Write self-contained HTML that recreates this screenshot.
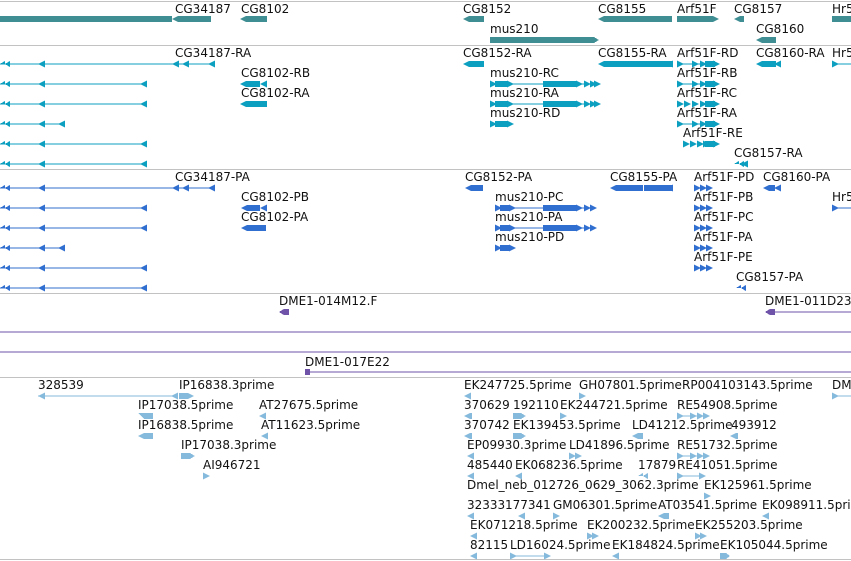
<!DOCTYPE html>
<html><head><meta charset="utf-8"><style>
html,body{margin:0;padding:0;background:#fff;width:851px;height:561px;overflow:hidden}
svg text{font-family:"DejaVu Sans","Liberation Sans",sans-serif;font-size:12px;fill:#111;letter-spacing:0px}
</style></head><body>
<svg width="851" height="561" xmlns="http://www.w3.org/2000/svg" shape-rendering="crispEdges">
<defs>
<polygon id="la" points="0,3 7,-0.5 7,6.5"/>
<polygon id="ra" points="0,-0.5 7,3 0,6.5"/>
<polygon id="la2" points="0,3 5,0 5,6 5,3 10,0 10,6 5,3"/>
</defs>
<g fill="#c2c2c2">
<rect x="0" y="1" width="851" height="1"/><rect x="0" y="45" width="851" height="1"/>
<rect x="0" y="169" width="851" height="1"/><rect x="0" y="293" width="851" height="1"/>
<rect x="0" y="377" width="851" height="1"/><rect x="0" y="559" width="851" height="1"/>
</g>

<!-- Track 1 -->
<g fill="#3f8e93">
<rect x="0" y="16" width="172" height="6"/>
<polygon points="172,19 178,16 211,16 211,22 178,22"/>
<polygon points="240,19 246,16 267,16 267,22 246,22"/>
<polygon points="463,19 469,16 484,16 484,22 469,22"/>
<polygon points="490,37 594,37 599,40 594,43 490,43"/>
<polygon points="598,19 604,16 672,16 672,22 604,22"/>
<polygon points="677,16 713,16 719,19 713,22 677,22"/>
<polygon points="734,19 740,16 744,16 744,22 740,22"/>
<rect x="832" y="16" width="19" height="6"/>
<polygon points="756,40 762,37 776,37 776,43 762,43"/>
</g>
<text x="175" y="13">CG34187</text><text x="241" y="13">CG8102</text>
<text x="463" y="13">CG8152</text><text x="598" y="13">CG8155</text>
<text x="677" y="13">Arf51F</text><text x="734" y="13">CG8157</text>
<text x="832" y="13">Hr5</text>
<text x="490" y="33">mus210</text><text x="756" y="33">CG8160</text>

<!-- Track 2 (RA) -->
<g fill="#0d9fc0">
<rect x="0" y="63.5" width="213" height="1"/>
<use href="#la2" x="0" y="61"/><use href="#la" x="38" y="61"/><use href="#la" x="172" y="61"/><use href="#la" x="182" y="61"/><use href="#la" x="208" y="61"/>
<rect x="0" y="83.5" width="146" height="1"/><use href="#la2" x="0" y="81"/><use href="#la" x="38" y="81"/><use href="#la" x="140" y="81"/>
<rect x="0" y="103.5" width="146" height="1"/><use href="#la2" x="0" y="101"/><use href="#la" x="38" y="101"/><use href="#la" x="140" y="101"/>
<rect x="0" y="123.5" width="64" height="1"/><use href="#la2" x="0" y="121"/><use href="#la" x="38" y="121"/><use href="#la" x="58" y="121"/>
<rect x="0" y="143.5" width="146" height="1"/><use href="#la2" x="0" y="141"/><use href="#la" x="38" y="141"/><use href="#la" x="140" y="141"/>
<rect x="0" y="163.5" width="146" height="1"/><use href="#la2" x="0" y="161"/><use href="#la" x="38" y="161"/><use href="#la" x="140" y="161"/>
</g>
<g fill="#0d9fc0">
<polygon points="240,84 246,81 260,81 260,87 246,87"/><use href="#la" x="260" y="81"/>
<polygon points="240,104 246,101 267,101 267,107 246,107"/>
<polygon points="463,64 469,61 484,61 484,67 469,67"/>
<polygon points="598,64 604,61 672,61 672,67 604,67"/><use href="#la" x="666" y="61"/>
<rect x="677" y="63.5" width="40" height="1"/><use href="#ra" x="677" y="61"/><use href="#ra" x="692" y="61"/><use href="#ra" x="700" y="61"/><rect x="705" y="61" width="10" height="6"/><use href="#ra" x="713" y="61"/>
<polygon points="756,64 762,61 776,61 776,67 762,67"/><use href="#la" x="774" y="61"/>
<rect x="832" y="63.5" width="19" height="1"/><use href="#ra" x="832" y="61"/>
<rect x="490" y="83.5" width="109" height="1"/><use href="#ra" x="490" y="81"/><rect x="495" y="81" width="13" height="6"/><use href="#ra" x="507" y="81"/><rect x="543" y="81" width="34" height="6"/><use href="#ra" x="576" y="81"/><use href="#ra" x="584" y="81"/><use href="#ra" x="590" y="81"/><use href="#ra" x="594" y="81"/>
<rect x="490" y="103.5" width="109" height="1"/><use href="#ra" x="490" y="101"/><rect x="495" y="101" width="13" height="6"/><use href="#ra" x="507" y="101"/><rect x="543" y="101" width="34" height="6"/><use href="#ra" x="576" y="101"/><use href="#ra" x="584" y="101"/><use href="#ra" x="590" y="101"/><use href="#ra" x="594" y="101"/>
<use href="#ra" x="490" y="121"/><rect x="495" y="121" width="13" height="6"/><use href="#ra" x="507" y="121"/>
<rect x="677" y="83.5" width="40" height="1"/><use href="#ra" x="677" y="81"/><use href="#ra" x="692" y="81"/><use href="#ra" x="700" y="81"/><rect x="705" y="81" width="10" height="6"/><use href="#ra" x="713" y="81"/>
<use href="#ra" x="677" y="101"/><use href="#ra" x="684" y="101"/><use href="#ra" x="692" y="101"/><use href="#ra" x="700" y="101"/><rect x="705" y="101" width="10" height="6"/><use href="#ra" x="713" y="101"/>
<rect x="677" y="123.5" width="40" height="1"/><use href="#ra" x="677" y="121"/><use href="#ra" x="692" y="121"/><use href="#ra" x="700" y="121"/><rect x="705" y="121" width="10" height="6"/><use href="#ra" x="713" y="121"/>
<use href="#ra" x="683" y="141"/><use href="#ra" x="690" y="141"/><use href="#ra" x="697" y="141"/><use href="#ra" x="703" y="141"/><rect x="705" y="141" width="10" height="6"/><use href="#ra" x="713" y="141"/>
<use href="#la2" x="734" y="161"/><use href="#la" x="741" y="161"/>
</g>
<text x="175" y="57">CG34187-RA</text><text x="241" y="77">CG8102-RB</text><text x="241" y="97">CG8102-RA</text>
<text x="463" y="57">CG8152-RA</text><text x="598" y="57">CG8155-RA</text><text x="677" y="57">Arf51F-RD</text>
<text x="756" y="57">CG8160-RA</text><text x="832" y="57">Hr5</text>
<text x="490" y="77">mus210-RC</text><text x="490" y="97">mus210-RA</text><text x="490" y="117">mus210-RD</text>
<text x="677" y="77">Arf51F-RB</text><text x="677" y="97">Arf51F-RC</text><text x="677" y="117">Arf51F-RA</text>
<text x="683" y="137">Arf51F-RE</text><text x="734" y="157">CG8157-RA</text>

<!-- Track 3 (PA) -->
<g fill="#306fcf">
<g transform="translate(0,124)">
<rect x="0" y="63.5" width="213" height="1"/>
<use href="#la2" x="0" y="61"/><use href="#la" x="38" y="61"/><use href="#la" x="172" y="61"/><use href="#la" x="182" y="61"/><use href="#la" x="208" y="61"/>
<rect x="0" y="83.5" width="146" height="1"/><use href="#la2" x="0" y="81"/><use href="#la" x="38" y="81"/><use href="#la" x="140" y="81"/>
<rect x="0" y="103.5" width="146" height="1"/><use href="#la2" x="0" y="101"/><use href="#la" x="38" y="101"/><use href="#la" x="140" y="101"/>
<rect x="0" y="123.5" width="64" height="1"/><use href="#la2" x="0" y="121"/><use href="#la" x="38" y="121"/><use href="#la" x="58" y="121"/>
<rect x="0" y="143.5" width="146" height="1"/><use href="#la2" x="0" y="141"/><use href="#la" x="38" y="141"/><use href="#la" x="140" y="141"/>
<rect x="0" y="163.5" width="146" height="1"/><use href="#la2" x="0" y="161"/><use href="#la" x="38" y="161"/><use href="#la" x="140" y="161"/>
<polygon points="241,84 247,81 260,81 260,87 247,87"/><use href="#la" x="260" y="81"/>
<polygon points="241,104 247,101 266,101 266,107 247,107"/>
</g>
<polygon points="465,188 471,185 483,185 483,191 471,191"/>
<polygon points="610,188 616,185 672,185 672,191 616,191"/><use href="#la" x="666" y="185"/><rect x="643" y="185" width="1" height="6" fill="#fff"/>
<polygon points="763,188 769,185 775,185 775,191 769,191"/><use href="#la" x="774" y="185"/>
<rect x="832" y="207.5" width="19" height="1"/><use href="#ra" x="832" y="205"/>
<rect x="495" y="207.5" width="101" height="1"/><use href="#ra" x="495" y="205"/><rect x="500" y="205" width="10" height="6"/><use href="#ra" x="509" y="205"/><rect x="543" y="205" width="34" height="6"/><use href="#ra" x="576" y="205"/><use href="#ra" x="584" y="205"/><use href="#ra" x="590" y="205"/>
<rect x="495" y="227.5" width="101" height="1"/><use href="#ra" x="495" y="225"/><rect x="500" y="225" width="10" height="6"/><use href="#ra" x="509" y="225"/><rect x="543" y="225" width="34" height="6"/><use href="#ra" x="576" y="225"/><use href="#ra" x="584" y="225"/><use href="#ra" x="590" y="225"/>
<use href="#ra" x="495" y="245"/><rect x="500" y="245" width="10" height="6"/><use href="#ra" x="509" y="245"/>
<use href="#ra" x="694" y="185"/><use href="#ra" x="700" y="185"/><use href="#ra" x="706" y="185"/>
<use href="#ra" x="694" y="205"/><use href="#ra" x="700" y="205"/><use href="#ra" x="706" y="205"/>
<use href="#ra" x="694" y="225"/><use href="#ra" x="700" y="225"/><use href="#ra" x="706" y="225"/>
<use href="#ra" x="694" y="245"/><use href="#ra" x="700" y="245"/><use href="#ra" x="706" y="245"/>
<use href="#ra" x="694" y="265"/><use href="#ra" x="700" y="265"/><use href="#ra" x="706" y="265"/>
<use href="#la2" x="736" y="285"/>
</g>
<text x="175" y="181">CG34187-PA</text><text x="241" y="201">CG8102-PB</text><text x="241" y="221">CG8102-PA</text>
<text x="465" y="181">CG8152-PA</text><text x="610" y="181">CG8155-PA</text><text x="694" y="181">Arf51F-PD</text>
<text x="763" y="181">CG8160-PA</text><text x="832" y="201">Hr5</text>
<text x="495" y="201">mus210-PC</text><text x="495" y="221">mus210-PA</text><text x="495" y="241">mus210-PD</text>
<text x="694" y="201">Arf51F-PB</text><text x="694" y="221">Arf51F-PC</text><text x="694" y="241">Arf51F-PA</text>
<text x="694" y="261">Arf51F-PE</text><text x="736" y="281">CG8157-PA</text>

<!-- Track 4 -->
<g fill="#6e53a9">
<polygon points="279,312 284,309 289,309 289,315 284,315"/>
<polygon points="765,312 770,309 775,309 775,311.5 851,311.5 851,312.5 775,312.5 775,315 770,315"/>
<rect x="0" y="331.5" width="851" height="1"/><rect x="0" y="351.5" width="851" height="1"/>
<polygon points="305,369 311,372 305,375"/><rect x="305" y="369" width="5" height="6"/><rect x="305" y="371.5" width="546" height="1"/>
</g>
<text x="279" y="305">DME1-014M12.F</text><text x="765" y="305">DME1-011D23</text>
<text x="305" y="366">DME1-017E22</text>

<!-- Track 5 -->
<g fill="#86badc">
<rect x="38" y="395.5" width="139" height="1"/><use href="#la" x="38" y="393"/><use href="#la" x="171" y="393"/>
<polygon points="179,393 188,393 194,396 188,399 179,399"/>
<polygon points="138,413 153,413 153,419 144,419"/><use href="#la" x="259" y="413"/>
<polygon points="138,436 144,433 153,433 153,439 144,439"/><use href="#la" x="261" y="433"/>
<polygon points="181,453 190,453 195,456 190,459 181,459"/><use href="#ra" x="203" y="473"/>
<use href="#la" x="464" y="393"/><use href="#ra" x="579" y="393"/><rect x="832" y="395.5" width="19" height="1"/><use href="#ra" x="832" y="393"/>
<polygon points="464,416 470,413 472,413 472,419 470,419"/><polygon points="513,413 521,413 526,416 521,419 513,419"/><use href="#ra" x="560" y="413"/>
<rect x="677" y="415.5" width="28" height="1"/><use href="#ra" x="677" y="413"/><use href="#ra" x="690" y="413"/><use href="#ra" x="697" y="413"/><use href="#ra" x="703" y="413"/>
<polygon points="464,436 470,433 472,433 472,439 470,439"/><polygon points="513,433 521,433 526,436 521,439 513,439"/>
<polygon points="632,436 638,433 643,433 643,439 638,439"/><polygon points="730,436 736,433 738,433 738,439 736,439"/>
<use href="#la" x="467" y="453"/><use href="#ra" x="569" y="453"/><use href="#ra" x="575" y="453"/>
<rect x="677" y="455.5" width="28" height="1"/><use href="#ra" x="677" y="453"/><use href="#ra" x="690" y="453"/><use href="#ra" x="697" y="453"/><use href="#ra" x="703" y="453"/>
<use href="#la" x="467" y="473"/><use href="#la" x="515" y="473"/><use href="#la2" x="638" y="473"/><rect x="677" y="475.5" width="28" height="1"/><use href="#ra" x="677" y="473"/><use href="#ra" x="699" y="473"/>
<use href="#ra" x="704" y="493"/>
<use href="#la" x="467" y="513"/><use href="#la" x="518" y="513"/><use href="#ra" x="553" y="513"/><polygon points="658,516 664,513 669,513 669,519 664,519"/><use href="#la" x="762" y="513"/>
<use href="#la" x="470" y="533"/><use href="#ra" x="587" y="533"/><use href="#ra" x="592" y="533"/><use href="#ra" x="695" y="533"/><use href="#ra" x="700" y="533"/>
<use href="#la" x="470" y="553"/><rect x="510" y="555.5" width="40" height="1"/><use href="#ra" x="510" y="553"/><use href="#ra" x="544" y="553"/><use href="#la" x="612" y="553"/><polygon points="720,553 726,553 730,556 726,559 720,559"/>
</g>
<text x="38" y="389">328539</text><text x="179" y="389">IP16838.3prime</text>
<text x="138" y="409">IP17038.5prime</text><text x="259" y="409">AT27675.5prime</text>
<text x="138" y="429">IP16838.5prime</text><text x="261" y="429">AT11623.5prime</text>
<text x="181" y="449">IP17038.3prime</text><text x="203" y="469">AI946721</text>
<text x="464" y="389">EK247725.5prime</text><text x="579" y="389">GH07801.5prime</text><text x="682" y="389">RP004103143.5prime</text><text x="832" y="389">DM</text>
<text x="464" y="409">370629</text><text x="513" y="409">192110</text><text x="560" y="409">EK244721.5prime</text><text x="677" y="409">RE54908.5prime</text>
<text x="464" y="429">370742</text><text x="513" y="429">EK139453.5prime</text><text x="632" y="429">LD41212.5prime</text><text x="731" y="429">493912</text>
<text x="467" y="449">EP09930.3prime</text><text x="569" y="449">LD41896.5prime</text><text x="677" y="449">RE51732.5prime</text>
<text x="467" y="469">485440</text><text x="515" y="469">EK068236.5prime</text><text x="638" y="469">17879</text><text x="677" y="469">RE41051.5prime</text>
<text x="467" y="489">Dmel_neb_012726_0629_3062.3prime</text><text x="704" y="489">EK125961.5prime</text>
<text x="467" y="509">32333</text><text x="505" y="509">177341</text><text x="553" y="509">GM06301.5prime</text><text x="658" y="509">AT03541.5prime</text><text x="762" y="509">EK098911.5prime</text>
<text x="470" y="529">EK071218.5prime</text><text x="587" y="529">EK200232.5prime</text><text x="695" y="529">EK255203.5prime</text>
<text x="470" y="549">82115</text><text x="510" y="549">LD16024.5prime</text><text x="612" y="549">EK184824.5prime</text><text x="720" y="549">EK105044.5prime</text>
</svg>
</body></html>
